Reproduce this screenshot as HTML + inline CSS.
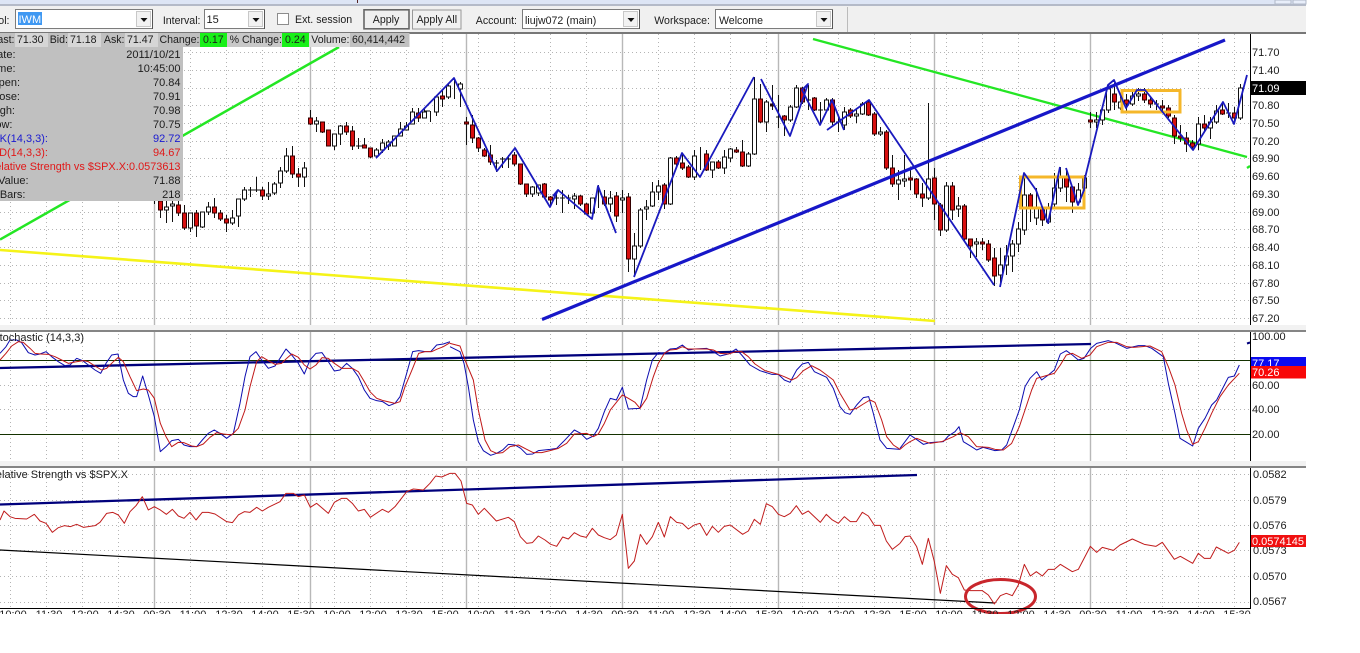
<!DOCTYPE html>
<html><head><meta charset="utf-8"><title>Chart</title>
<style>
html,body{margin:0;padding:0;background:#fff;width:1360px;height:653px;overflow:hidden}
svg{display:block;font-family:"Liberation Sans",sans-serif;font-size:11px;fill:#222}
.c{shape-rendering:crispEdges}
.b{fill:#1c1c1c}
.t{fill:#1c1c1c;font-size:10.6px}
.l{fill:none;stroke-linejoin:round}
</style></head><body>
<svg width="1360" height="653" viewBox="0 0 1360 653">
<rect width="1360" height="653" fill="#fff"/>
<rect x="0" y="0" width="1306" height="33" fill="#f0f0f0"/>
<rect x="0" y="0" width="1306" height="5" fill="#dde5f5"/>
<rect x="0" y="4" width="1306" height="2" fill="#b4bac8"/>
<rect x="1275" y="0" width="16" height="4" fill="#e8eefa" stroke="#b0b8c8"/>
<rect x="1293" y="0" width="13" height="4" fill="#e8eefa" stroke="#b0b8c8"/>
<rect x="357" y="0" width="1" height="3" fill="#522"/>
<rect x="847" y="7" width="1" height="25" fill="#bbb"/>
<rect x="0" y="32" width="1306" height="2" fill="#777"/>

<!-- grid -->
<path class="c" fill="none" stroke="#b4b4b4" stroke-dasharray="1 3" d="M10.5 34V608M46.5 34V608M82.5 34V608M118.5 34V608M190.5 34V608M226.5 34V608M262.5 34V608M298.5 34V608M334.5 34V608M370.5 34V608M406.5 34V608M442.5 34V608M478.5 34V608M514.5 34V608M550.5 34V608M586.5 34V608M658.5 34V608M694.5 34V608M730.5 34V608M766.5 34V608M802.5 34V608M838.5 34V608M874.5 34V608M910.5 34V608M946.5 34V608M982.5 34V608M1018.5 34V608M1054.5 34V608M1126.5 34V608M1162.5 34V608M1198.5 34V608M1234.5 34V608"/>
<path class="c" fill="none" stroke="#b4b4b4" stroke-dasharray="1 3" d="M0 52.5H1250M0 70.5H1250M0 88.5H1250M0 105.5H1250M0 123.5H1250M0 141.5H1250M0 158.5H1250M0 176.5H1250M0 194.5H1250M0 212.5H1250M0 229.5H1250M0 247.5H1250M0 265.5H1250M0 283.5H1250M0 300.5H1250M0 318.5H1250M0 385.5H1250M0 409.5H1250M0 474.5H1250M0 500.5H1250M0 525.5H1250M0 550.5H1250M0 576.5H1250M0 602.5H1250"/>
<path fill="none" stroke="#b8b8b8" stroke-width="1.4" d="M154.5 34V608M310.5 34V608M466.5 34V608M622.5 34V608M778.5 34V608M934.5 34V608M1090.5 34V608"/>

<!-- gaps between panes -->
<rect x="0" y="325" width="1306" height="6" fill="#f2f2f2"/>
<rect x="0" y="330" width="1306" height="2" fill="#858585"/>
<rect x="0" y="461" width="1306" height="6" fill="#f2f2f2"/>
<rect x="0" y="466" width="1306" height="2" fill="#858585"/>

<!-- trend lines under candles -->
<path d="M0 250L935 321" stroke="#f5f318" stroke-width="2.6" fill="none"/>
<path d="M0 239.5L339 47" stroke="#24e624" stroke-width="2.5" fill="none"/>
<path d="M813 39L1247 157M1247 168L1250 166" stroke="#24e624" stroke-width="2.3" fill="none"/>

<!-- candles: wicks -->
<path class="c" stroke="#111" fill="none" d="M154.5 201V204M160.5 200V218M166.5 200V223M172.5 200V222M178.5 198V216M184.5 205V230M190.5 213V232M196.5 210V237M202.5 212V228M208.5 202V215M214.5 198V218M220.5 210V221M226.5 215V232M232.5 210V225M238.5 199V227M244.5 187V201M250.5 187V197M256.5 177V192M262.5 187V200M268.5 182V200M274.5 182V195M280.5 167V188M286.5 148V173M292.5 146V178M298.5 168V187M304.5 162V187M310.5 110V125M316.5 117V132M322.5 122V133M328.5 130V146M334.5 134V150M340.5 125V145M346.5 122V135M352.5 126V150M358.5 138V149M364.5 138V148M370.5 148V158M376.5 148V156M382.5 139V153M388.5 140V150M394.5 136V146M400.5 122V136M406.5 122V130M412.5 108V124M418.5 108V122M424.5 108V118M430.5 111V122M436.5 97V116M442.5 90V107M448.5 84V99M454.5 80V99M460.5 82V107M466.5 117V145M472.5 115V143M478.5 137V152M484.5 148V157M490.5 145V165M496.5 160V172M502.5 157V168M508.5 155V168M514.5 152V166M520.5 164V185M526.5 184V197M532.5 186V197M538.5 185V196M544.5 183V199M550.5 196V207M556.5 192V205M562.5 190V213M568.5 195V204M574.5 193V209M580.5 195V206M586.5 203V215M592.5 198V214M598.5 185V208M604.5 190V206M610.5 191V212M616.5 192V222M622.5 190V213M628.5 193V272M634.5 233V277M640.5 208V248M646.5 200V220M652.5 182V207M658.5 180V200M664.5 183V209M670.5 157V205M676.5 156V166M682.5 153V170M688.5 165V178M694.5 150V180M700.5 147V170M706.5 150V171M712.5 162V178M718.5 160V169M724.5 150V174M730.5 148V162M736.5 147V153M742.5 140V167M748.5 152V167M754.5 77V155M760.5 84V123M766.5 100V132M772.5 85V110M778.5 95V128M784.5 115V136M790.5 105V122M796.5 85V108M802.5 87V104M808.5 85V110M814.5 97V111M820.5 102V123M826.5 98V112M832.5 98V125M838.5 115V132M844.5 107V130M850.5 108V118M856.5 108V123M862.5 102V115M868.5 100V116M874.5 112V136M880.5 127V136M886.5 130V170M892.5 155V187M898.5 170V200M904.5 155V187M910.5 170V190M916.5 178V198M922.5 183V207M928.5 103V200M934.5 168V220M940.5 203V236M946.5 182V232M952.5 182V220M958.5 197V217M964.5 204V242M970.5 239V258M976.5 238V257M982.5 238V250M988.5 240V262M994.5 248V286M1000.5 248V287M1006.5 245V275M1012.5 240V272M1018.5 222V252M1024.5 175V235M1030.5 193V222M1036.5 188V225M1042.5 208V226M1048.5 203V224M1054.5 173V207M1060.5 167V192M1066.5 170V202M1072.5 186V213M1078.5 183V205M1084.5 175V190M1090.5 112V128M1096.5 112V128M1102.5 105V125M1108.5 85V113M1114.5 83V110M1120.5 95V110M1126.5 94V112M1132.5 92V106M1138.5 88V101M1144.5 88V103M1150.5 96V108M1156.5 100V110M1162.5 100V112M1168.5 105V118M1174.5 115V144M1180.5 125V142M1186.5 132V152M1192.5 140V150M1198.5 117V150M1204.5 115V132M1210.5 117V139M1216.5 105V124M1222.5 103V115M1228.5 103V118M1234.5 107V122M1240.5 84V120"/>

<!-- white bodies -->
<path class="c" fill="#fff" stroke="#111" d="M164.5 207h4v3h-4zM170.5 204h4v2h-4zM188.5 213h4v15h-4zM200.5 212h4v15h-4zM206.5 207h4v5h-4zM230.5 218h4v5h-4zM236.5 199h4v17h-4zM242.5 190h4v9h-4zM266.5 194h4v2h-4zM272.5 184h4v9h-4zM278.5 171h4v12h-4zM284.5 156h4v15h-4zM302.5 168h4v9h-4zM314.5 121h4v3h-4zM332.5 134h4v12h-4zM338.5 126h4v8h-4zM374.5 150h4v6h-4zM380.5 143h4v7h-4zM386.5 142h4v4h-4zM392.5 136h4v10h-4zM398.5 129h4v7h-4zM404.5 126h4v4h-4zM410.5 112h4v12h-4zM422.5 112h4v6h-4zM434.5 97h4v15h-4zM446.5 86h4v11h-4zM458.5 84h4v5h-4zM530.5 187h4v7h-4zM536.5 185h4v8h-4zM572.5 196h4v3h-4zM590.5 198h4v15h-4zM608.5 198h4v6h-4zM620.5 198h4v2h-4zM632.5 246h4v13h-4zM638.5 210h4v36h-4zM644.5 207h4v2h-4zM650.5 192h4v14h-4zM656.5 186h4v6h-4zM668.5 158h4v46h-4zM692.5 156h4v21h-4zM710.5 162h4v8h-4zM722.5 157h4v11h-4zM728.5 149h4v9h-4zM746.5 154h4v12h-4zM752.5 99h4v55h-4zM764.5 102h4v20h-4zM788.5 107h4v13h-4zM794.5 88h4v19h-4zM824.5 100h4v10h-4zM842.5 112h4v13h-4zM854.5 114h4v2h-4zM860.5 104h4v10h-4zM878.5 132h4v2h-4zM896.5 180h4v4h-4zM902.5 179h4v2h-4zM926.5 179h4v19h-4zM944.5 186h4v44h-4zM956.5 206h4v3h-4zM974.5 242h4v2h-4zM998.5 265h4v10h-4zM1004.5 256h4v9h-4zM1010.5 244h4v12h-4zM1016.5 229h4v15h-4zM1022.5 195h4v35h-4zM1034.5 208h4v10h-4zM1046.5 209h4v13h-4zM1052.5 188h4v16h-4zM1058.5 178h4v10h-4zM1076.5 190h4v12h-4zM1082.5 178h4v10h-4zM1094.5 120h4v2h-4zM1100.5 110h4v10h-4zM1106.5 89h4v21h-4zM1118.5 102h4v6h-4zM1130.5 96h4v8h-4zM1136.5 94h4v2h-4zM1196.5 124h4v20h-4zM1208.5 122h4v6h-4zM1214.5 111h4v11h-4zM1238.5 88h4v30h-4z"/>

<!-- red bodies -->
<path class="c" fill="#d80f0f" stroke="#300" d="M158.5 201h4v9h-4zM176.5 205h4v8h-4zM182.5 213h4v15h-4zM194.5 213h4v13h-4zM212.5 207h4v6h-4zM218.5 213h4v6h-4zM224.5 219h4v4h-4zM260.5 190h4v6h-4zM290.5 156h4v18h-4zM296.5 174h4v3h-4zM308.5 118h4v6h-4zM320.5 122h4v10h-4zM326.5 130h4v16h-4zM344.5 126h4v6h-4zM350.5 131h4v15h-4zM362.5 145h4v3h-4zM368.5 148h4v9h-4zM416.5 113h4v5h-4zM440.5 96h4v3h-4zM464.5 122h4v2h-4zM470.5 125h4v13h-4zM476.5 138h4v10h-4zM482.5 150h4v6h-4zM488.5 155h4v7h-4zM512.5 155h4v9h-4zM518.5 164h4v20h-4zM524.5 184h4v10h-4zM542.5 184h4v13h-4zM548.5 197h4v3h-4zM578.5 196h4v8h-4zM584.5 204h4v10h-4zM602.5 197h4v7h-4zM614.5 196h4v20h-4zM626.5 197h4v62h-4zM662.5 185h4v19h-4zM674.5 158h4v6h-4zM680.5 163h4v5h-4zM686.5 167h4v10h-4zM704.5 154h4v16h-4zM716.5 162h4v6h-4zM734.5 150h4v2h-4zM740.5 152h4v14h-4zM758.5 99h4v23h-4zM770.5 104h4v2h-4zM782.5 116h4v4h-4zM800.5 88h4v14h-4zM812.5 98h4v12h-4zM830.5 100h4v22h-4zM848.5 110h4v6h-4zM866.5 102h4v13h-4zM872.5 114h4v20h-4zM884.5 132h4v36h-4zM890.5 168h4v16h-4zM908.5 178h4v2h-4zM914.5 179h4v15h-4zM920.5 194h4v4h-4zM932.5 178h4v26h-4zM938.5 205h4v25h-4zM950.5 186h4v24h-4zM962.5 206h4v33h-4zM968.5 239h4v7h-4zM980.5 242h4v2h-4zM986.5 244h4v16h-4zM992.5 258h4v18h-4zM1028.5 195h4v13h-4zM1040.5 209h4v11h-4zM1064.5 178h4v9h-4zM1070.5 187h4v15h-4zM1088.5 120h4v2h-4zM1112.5 94h4v8h-4zM1124.5 100h4v4h-4zM1142.5 94h4v6h-4zM1148.5 100h4v4h-4zM1160.5 106h4v2h-4zM1166.5 108h4v8h-4zM1172.5 118h4v18h-4zM1178.5 136h4v2h-4zM1184.5 138h4v6h-4zM1190.5 143h4v4h-4zM1202.5 124h4v4h-4zM1220.5 110h4v4h-4zM1232.5 113h4v5h-4z"/>
<path class="c" stroke="#111" fill="none" d="M248 190h6M254 190h6M356 146h6M424 111h6M494 163h5M500 159h6M506 159h5M554 198h5M560 198h5M566 198h5M770 105h4M776 117h5M806 100h5M818 110h5M836 122h5M1154 104h5M1226 113h5"/>

<!-- orange boxes -->
<rect x="1020.5" y="177" width="63.5" height="31" fill="none" stroke="#f5b72a" stroke-width="3"/>
<rect x="1122" y="90.5" width="58" height="21.5" fill="none" stroke="#f5b72a" stroke-width="3"/>

<!-- blue zigzag -->
<path class="l" stroke="#1a1abe" stroke-width="1.8" d="M376 158L454 78L497 171L515 148L550 207L558 190L553 196M558 190L592 219L598 186L616 233M634 277L682 153L700 177L754 77M761 79L790 136L808 84L802 90L820 125L832 100L844 130M827 130L869 100L994 285M1000 287L1024 173L1036 190L1048 223L1060 167M1066 168L1078 205L1084 190L1085 178L1100 117L1108 85L1114 80L1126 108L1137 90L1145 90L1193 150L1223 102L1234 124L1247 75"/>
<path d="M542 319.5L1225 40" stroke="#1717c8" stroke-width="3.2" fill="none"/>

<!-- stochastic pane -->
<path class="c" d="M0 360.5H1250M0 434.5H1250" stroke="#143200" fill="none"/>
<path d="M0 368L1091 344" stroke="#00007c" stroke-width="2.3" fill="none"/>
<path d="M1247 343.5L1250 342.5" stroke="#00007c" stroke-width="2" fill="none"/>
<g transform="translate(0,330) scale(.33333)" fill="none" stroke-width="3" stroke-linejoin="round">
<polyline stroke="#0c0cb0" points="0,70 18,50 30,30 50,30 65,38 85,68 105,75 120,72 138,65 155,80 175,95 195,107 210,105 230,85 248,92 265,105 285,120 302,130 318,100 335,75 354,72 370,150 385,190 400,200 410,200 428,138 445,195 463,260 481,365 498,350 515,332 535,328 552,345 570,350 590,350 607,330 625,310 643,300 660,310 680,325 700,310 720,220 735,140 750,80 768,65 785,90 805,115 825,108 840,85 858,57 875,75 895,100 913,132 930,90 948,70 966,68 985,95 1003,123 1020,120 1040,100 1057,115 1075,140 1093,180 1110,205 1130,212 1148,215 1167,227 1185,220 1200,200 1220,130 1238,65 1256,62 1275,65 1292,65 1310,45 1330,42 1350,35"/>
<polyline stroke="#c01818" points="0,90 18,70 35,48 55,35 70,37 90,55 105,70 122,72 145,73 165,80 185,90 205,100 225,96 250,92 265,95 285,108 305,120 320,115 340,95 355,82 370,95 390,140 410,182 430,177 445,180 463,205 481,280 498,320 515,350 535,337 552,338 575,348 590,350 610,342 630,322 650,308 670,312 695,315 715,295 735,240 750,170 770,95 785,80 805,92 825,103 845,100 860,85 875,72 895,82 913,105 930,117 948,105 966,83 985,85 1003,100 1025,115 1057,115 1075,125 1093,155 1110,185 1130,205 1150,212 1185,220 1200,215 1215,170 1238,115 1256,70 1275,65 1295,65 1310,58 1330,50 1350,38"/>
</g>
<g transform="translate(450,330) scale(.33333)" fill="none" stroke-width="3" stroke-linejoin="round">
<polyline stroke="#0c0cb0" points="0,50 30,65 42,100 55,170 70,270 85,335 100,362 122,376 140,370 158,360 175,343 195,345 212,355 230,373 248,372 265,362 300,358 320,355 340,335 373,300 392,310 410,328 430,318 445,295 463,245 481,205 499,210 517,172 535,237 570,235 590,150 607,90 625,68 643,70 660,57 680,55 697,45 715,60 733,57 770,55 790,65 810,78 835,72 858,57 875,75 900,105 930,122 965,133 985,133 1003,150 1020,157 1040,120 1057,102 1075,97 1093,125 1130,142 1150,175 1170,230 1185,248 1200,253 1220,225 1240,203 1256,200 1270,250 1290,330 1310,355 1350,358"/>
<polyline stroke="#c01818" points="0,40 30,48 45,90 70,150 85,240 105,330 122,362 140,370 158,368 180,350 205,345 230,358 250,368 275,368 300,362 325,355 350,340 373,312 410,310 430,320 445,312 463,280 481,240 517,195 535,205 555,217 570,235 590,205 610,140 625,100 643,70 660,60 680,58 697,50 715,57 770,57 790,60 810,70 835,72 858,65 875,65 895,80 915,102 945,122 985,133 1003,140 1025,150 1040,143 1060,122 1085,107 1110,120 1150,150 1170,190 1200,240 1220,235 1240,222 1260,210 1275,217 1295,270 1310,320 1330,345 1350,358"/>
</g>
<g transform="translate(900,330) scale(.33333)" fill="none" stroke-width="3" stroke-linejoin="round">
<polyline stroke="#0c0cb0" points="0,355 15,335 30,315 45,325 70,343 90,338 130,335 145,318 165,305 177,290 190,335 210,347 230,360 250,352 285,362 305,360 320,345 340,290 358,240 375,170 390,145 410,125 425,150 445,135 463,120 481,72 499,62 517,75 535,90 552,85 572,55 590,40 625,32 645,38 680,55 715,47 735,47 755,55 790,80 805,160 825,250 840,325 860,337 878,348 895,295 915,265 935,225 950,210 985,142 1003,138 1018,105"/>
<polyline stroke="#c01818" points="0,358 15,345 30,335 50,325 70,333 90,340 125,335 160,320 180,308 205,320 230,350 265,352 285,358 310,360 335,340 358,290 375,240 395,180 410,145 445,135 463,130 481,105 499,75 517,70 545,85 570,75 590,50 625,37 650,37 680,50 700,52 750,48 785,65 805,110 825,165 845,250 860,300 878,343 895,335 915,295 935,250 960,200 985,165 1018,130"/>
</g>

<!-- relative strength pane -->
<path d="M0 504.5L917 475" stroke="#00007c" stroke-width="2.3" fill="none"/>
<path d="M0 550L995 603" stroke="#000" stroke-width="1.2" fill="none"/>
<g transform="translate(0,465) scale(.33333)" fill="none" stroke="#c01c1c" stroke-width="3" stroke-linejoin="round">
<polyline points="0,165 12,138 30,155 45,160 80,162 103,148 120,168 138,175 157,202 175,188 193,182 211,185 230,178 250,187 285,182 300,172 320,145 338,142 355,150 373,175 390,140 408,122 427,95 445,135 463,125 481,135 499,148 517,133 535,153 552,160 570,142 588,165 607,142 625,142 645,147 680,170 697,173 715,150 733,140 750,142 770,127 787,138 805,127 840,110 858,85 880,85 895,95 913,90 931,127 950,115 985,145 1003,112 1025,100 1040,100 1057,115 1075,138 1093,133 1111,157 1147,133 1165,142 1185,125 1220,80 1240,72 1270,75 1290,55 1307,33 1325,36 1350,25"/>
</g>
<g transform="translate(450,465) scale(.33333)" fill="none" stroke="#c01c1c" stroke-width="3" stroke-linejoin="round">
<polyline points="0,25 15,25 33,48 50,115 67,120 85,148 103,130 139,168 175,157 193,170 211,215 230,235 247,233 265,213 285,225 302,238 320,244 338,216 355,222 373,203 391,213 409,217 427,190 445,210 463,218 481,224 499,210 517,148 535,310 553,288 571,208 590,238 607,215 625,172 643,216 661,155 680,172 697,175 715,192 733,180 750,175 770,211 787,184 805,202 823,184 841,180 878,208 895,198 913,163 931,178 949,116 967,125 985,148 1003,155 1021,145 1039,122 1057,148 1075,138 1111,172 1129,148 1147,165 1165,175 1183,155 1201,170 1219,170 1237,142 1255,153 1273,181 1291,181 1309,228 1327,253 1350,235"/>
</g>
<g transform="translate(900,465) scale(.33333)" fill="none" stroke="#c01c1c" stroke-width="3" stroke-linejoin="round">
<polyline points="0,235 15,215 30,213 50,245 67,298 85,220 103,290 121,385 139,302 157,328 175,338 193,375 211,377 247,377 265,390 283,417 301,392 319,385 337,392 355,360 373,298 391,333 409,320 427,333 445,313 463,313 481,298 517,320 535,313 571,244 590,262 607,247 640,256 660,240 697,222 733,238 768,244 787,232 823,283 841,274 878,295 895,265 913,280 931,280 949,246 985,265 1003,256 1018,232"/>
</g>
<ellipse cx="1000.5" cy="596.5" rx="35" ry="17" fill="none" stroke="#c8262c" stroke-width="3"/>

<!-- pane titles -->
<text x="84" y="341" text-anchor="end" class="b">Stochastic (14,3,3)</text>
<text x="128" y="478" text-anchor="end" class="b">Relative Strength vs $SPX.X</text>

<!-- x axis -->
<rect x="0" y="608" width="1250" height="1" fill="#000"/>
<g text-anchor="middle" transform="translate(3,0)" class="b">
<text x="10" y="618">10:00</text><text x="46" y="618">11:30</text><text x="82" y="618">12:00</text><text x="118" y="618">14:30</text><text x="154" y="618">09:30</text><text x="190" y="618">11:00</text><text x="226" y="618">12:30</text><text x="262" y="618">14:00</text><text x="298" y="618">15:30</text><text x="334" y="618">10:00</text><text x="370" y="618">12:00</text><text x="406" y="618">12:30</text><text x="442" y="618">15:00</text><text x="478" y="618">10:00</text><text x="514" y="618">11:30</text><text x="550" y="618">12:00</text><text x="586" y="618">14:30</text><text x="622" y="618">09:30</text><text x="658" y="618">11:00</text><text x="694" y="618">12:30</text><text x="730" y="618">14:00</text><text x="766" y="618">15:30</text><text x="802" y="618">10:00</text><text x="838" y="618">12:00</text><text x="874" y="618">12:30</text><text x="910" y="618">15:00</text><text x="946" y="618">10:00</text><text x="982" y="618">11:30</text><text x="1018" y="618">12:00</text><text x="1054" y="618">14:30</text><text x="1090" y="618">09:30</text><text x="1126" y="618">11:00</text><text x="1162" y="618">12:30</text><text x="1198" y="618">14:00</text><text x="1234" y="618">15:30</text>
</g>
<rect x="0" y="614" width="1360" height="39" fill="#fff"/>

<!-- y axis -->
<path class="c" d="M1250.5 34V325M1250.5 332V461M1250.5 468V609" stroke="#000" fill="none"/>
<g class="b">
<text x="1252" y="56">71.70</text><text x="1252" y="74">71.40</text><text x="1252" y="109">70.80</text><text x="1252" y="127">70.50</text><text x="1252" y="145">70.20</text><text x="1252" y="162">69.90</text><text x="1252" y="180">69.60</text><text x="1252" y="198">69.30</text><text x="1252" y="216">69.00</text><text x="1252" y="233">68.70</text><text x="1252" y="251">68.40</text><text x="1252" y="269">68.10</text><text x="1252" y="287">67.80</text><text x="1252" y="304">67.50</text><text x="1252" y="322">67.20</text>
<text x="1252" y="340">100.00</text><text x="1252" y="389">60.00</text><text x="1252" y="413">40.00</text><text x="1252" y="438">20.00</text>
<text x="1253" y="478">0.0582</text><text x="1253" y="504">0.0579</text><text x="1253" y="529">0.0576</text><text x="1253" y="554">0.0573</text><text x="1253" y="580">0.0570</text><text x="1253" y="605">0.0567</text>
</g>
<rect x="1251" y="81" width="55" height="14" fill="#000"/><text x="1252" y="92" style="fill:#fff">71.09</text>
<rect x="1251" y="357" width="55" height="10" fill="#0a0af0"/><text x="1252" y="367" style="fill:#fff">77.17</text>
<rect x="1251" y="366" width="55" height="12.5" fill="#f80808"/><text x="1252" y="376" style="fill:#fff">70.26</text>
<rect x="1251" y="535" width="55" height="12" fill="#f01010"/><text x="1252" y="545" style="fill:#fff">0.0574145</text>

<!-- status bar -->
<rect x="0" y="33" width="409.5" height="14" fill="#c0c0c0"/>
<rect x="15" y="33" width="33" height="14" fill="#d6d6d6"/>
<rect x="68" y="33" width="33" height="14" fill="#d6d6d6"/>
<rect x="125" y="33" width="33" height="14" fill="#d6d6d6"/>
<rect x="200" y="33" width="27" height="14" fill="#18f018"/>
<rect x="227" y="33" width="55" height="14" fill="#c8c8c8"/>
<rect x="282" y="33" width="27" height="14" fill="#18f018"/>
<rect x="309" y="33" width="41" height="14" fill="#dcdcdc"/>
<g class="t">
<text x="14.5" y="43" text-anchor="end">Last:</text><text x="17" y="43">71.30</text>
<text x="68" y="43" text-anchor="end">Bid:</text><text x="70" y="43">71.18</text>
<text x="124.5" y="43" text-anchor="end">Ask:</text><text x="127" y="43">71.47</text>
<text x="199.5" y="43" text-anchor="end">Change:</text><text x="203" y="43">0.17</text>
<text x="282" y="43" text-anchor="end">% Change:</text><text x="285" y="43">0.24</text>
<text x="349.5" y="43" text-anchor="end">Volume:</text><text x="352" y="43">60,414,442</text>
</g>

<!-- info panel -->
<rect x="0" y="47" width="183" height="154" fill="#c0c0c0"/>
<g class="b">
<text x="15.5" y="58" text-anchor="end">Date:</text><text x="180.5" y="58" text-anchor="end">2011/10/21</text>
<text x="15.5" y="72" text-anchor="end">Time:</text><text x="180.5" y="72" text-anchor="end">10:45:00</text>
<text x="20" y="86" text-anchor="end">Open:</text><text x="180.5" y="86" text-anchor="end">70.84</text>
<text x="20" y="100" text-anchor="end">Close:</text><text x="180.5" y="100" text-anchor="end">70.91</text>
<text x="15" y="114" text-anchor="end">High:</text><text x="180.5" y="114" text-anchor="end">70.98</text>
<text x="12.5" y="128" text-anchor="end">Low:</text><text x="180.5" y="128" text-anchor="end">70.75</text>
<text x="48" y="142" text-anchor="end" style="fill:#1a1ad0">%K(14,3,3):</text><text x="180.5" y="142" text-anchor="end" style="fill:#1a1ad0">92.72</text>
<text x="48" y="156" text-anchor="end" style="fill:#e01818">%D(14,3,3):</text><text x="180.5" y="156" text-anchor="end" style="fill:#e01818">94.67</text>
<text x="180.5" y="170" text-anchor="end" style="fill:#e01818;font-size:10.9px">Relative Strength vs $SPX.X:0.0573613</text>
<text x="28.5" y="184" text-anchor="end">Value:</text><text x="180.5" y="184" text-anchor="end">71.88</text>
<text x="25.5" y="198" text-anchor="end">Bars:</text><text x="180.5" y="198" text-anchor="end">218</text>
</g>

<!-- toolbar -->
<g class="t">
<text x="9.5" y="24" text-anchor="end">Symbol:</text>
<text x="200.5" y="24" text-anchor="end">Interval:</text>
<text x="295" y="23">Ext. session</text>
<text x="517" y="24" text-anchor="end">Account:</text>
<text x="710" y="24" text-anchor="end">Workspace:</text>
</g>
<!-- combos -->
<g fill="#fff" stroke="#7c7c7c" class="c">
<rect x="15.5" y="9.5" width="137" height="19"/>
<rect x="204.5" y="9.5" width="60" height="19"/>
<rect x="522.5" y="9.5" width="117" height="19"/>
<rect x="715.5" y="9.5" width="117" height="19"/>
</g>
<path class="c" fill="none" stroke="#555" d="M152.500 10V29M264.500 10V29M639.500 10V29M832.500 10V29"/>
<g fill="#f2f2f2" stroke="#c8c8c8" class="c">
<rect x="136.500" y="11.500" width="14" height="15"/>
<rect x="248.500" y="11.500" width="14" height="15"/>
<rect x="623.500" y="11.500" width="14" height="15"/>
<rect x="816.500" y="11.500" width="14" height="15"/>
</g>
<path d="M140.500 18h7l-3.500 4zM252.500 18h7l-3.500 4zM627.500 18h7l-3.500 4zM820.500 18h7l-3.500 4z" fill="#111"/>
<rect x="18" y="12" width="24" height="13" fill="#3f98f2"/>
<text x="18.500" y="23" style="fill:#fff">IWM</text>
<text x="206.500" y="23" class="b">15</text>
<text x="525" y="24" class="t">liujw072 (main)</text>
<text x="719" y="24" class="t">Welcome</text>
<!-- checkbox -->
<rect x="277.500" y="13.500" width="11" height="11" fill="#fff" stroke="#8c8c8c" class="c"/>
<!-- buttons -->
<rect x="364" y="9.800" width="45" height="19" fill="#efefef" stroke="#666" stroke-width="1.600"/>
<text x="386" y="23" text-anchor="middle" class="t">Apply</text>
<rect x="412.500" y="10" width="48.500" height="19" fill="#f0f0f0" stroke="#999"/>
<text x="436.800" y="23" text-anchor="middle" class="t">Apply All</text>
</svg>
</body></html>
